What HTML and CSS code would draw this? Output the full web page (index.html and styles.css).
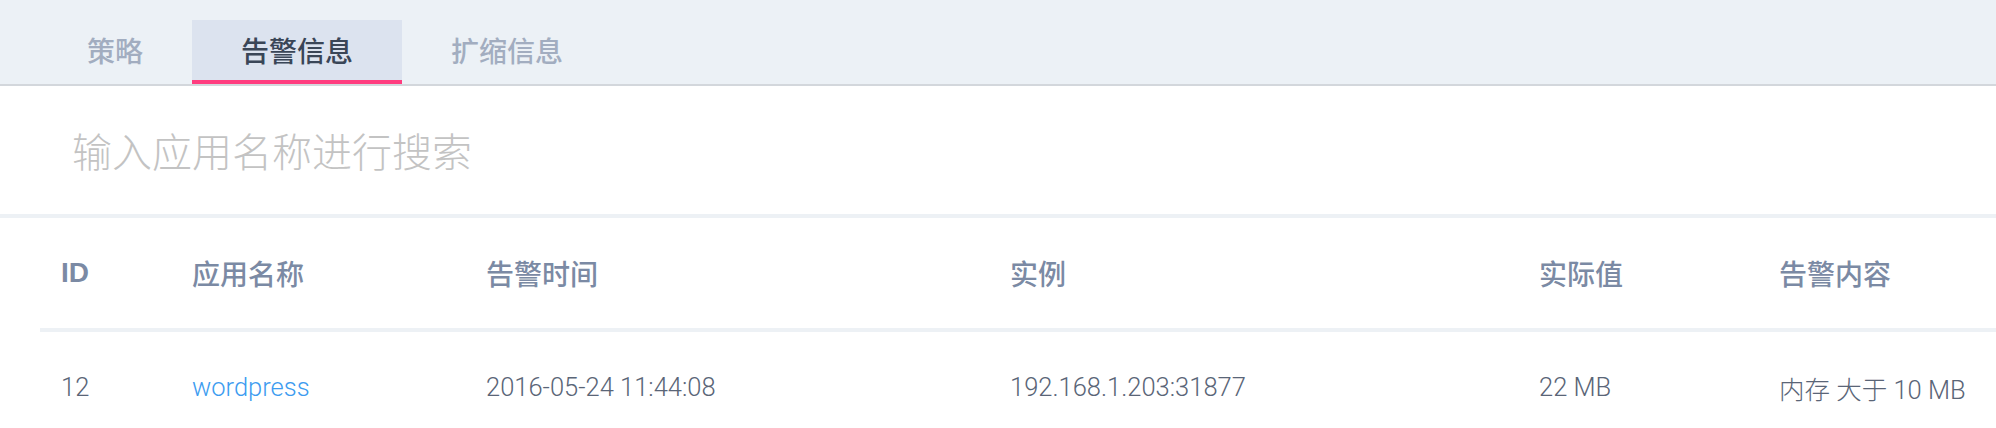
FILE: index.html
```html
<!DOCTYPE html>
<html lang="zh-CN">
<head>
<meta charset="utf-8">
<title>告警信息</title>
<link rel="stylesheet" href="styles.css">
</head>
<body>
<div class="tabbar">
  <div class="tab">策略</div>
  <div class="tab active">告警信息</div>
  <div class="tab">扩缩信息</div>
</div>
<div class="search">
  <input class="search-input" type="text" placeholder="输入应用名称进行搜索">
</div>
<div class="table">
  <div class="row head">
    <div class="cell">ID</div>
    <div class="cell">应用名称</div>
    <div class="cell">告警时间</div>
    <div class="cell">实例</div>
    <div class="cell">实际值</div>
    <div class="cell">告警内容</div>
  </div>
  <div class="row body">
    <div class="cell">12</div>
    <div class="cell"><a class="link" href="#">wordpress</a></div>
    <div class="cell">2016-05-24 11:44:08</div>
    <div class="cell">192.168.1.203:31877</div>
    <div class="cell">22 MB</div>
    <div class="cell">内存 大于 10 MB</div>
  </div>
</div>
</body>
</html>
```
FILE: styles.css
```css
* { box-sizing: border-box; }
html, body {
  margin: 0;
  padding: 0;
  background: #ffffff;
  font-family: "Noto Sans CJK SC", "Noto Sans", sans-serif;
}
.tabbar {
  display: flex;
  align-items: flex-end;
  height: 86px;
  padding-left: 38px;
  background: #ecf1f6;
  border-bottom: 2px solid #d3d7dc;
}
.tab {
  height: 64px;
  padding: 0 49px;
  line-height: 60px;
  font-size: 28px;
  font-weight: 500;
  color: #a2adc0;
  border-bottom: 4px solid transparent;
}
.tab.active {
  background: #dce3ef;
  color: #3a4657;
  border-bottom-color: #ff3d7f;
}
.search {
  height: 132px;
  display: flex;
  align-items: center;
  padding-left: 72px;
  border-bottom: 4px solid #edf1f5;
}
.search-input {
  width: 900px;
  border: none;
  outline: none;
  padding: 0;
  background: transparent;
  font-family: "Noto Sans CJK SC", sans-serif;
  font-size: 40px;
  font-weight: 300;
  color: #333;
}
.search-input::placeholder {
  color: #c3c3c3;
}
.table {
  margin-left: 40px;
}
.row {
  display: grid;
  grid-template-columns: 131px 294px 524px 529px 240px 1fr;
  align-items: center;
}
.row.head {
  height: 114px;
  border-bottom: 4px solid #edf1f5;
  font-size: 28px;
  font-weight: 500;
  color: #7b8aa4;
}
.row.body {
  height: 110px;
  font-family: Roboto, "Noto Sans CJK SC", sans-serif;
  font-size: 25.5px;
  font-weight: 300;
  color: #5a6577;
}
.cell {
  padding-left: 21px;
  white-space: nowrap;
}
.row.head .cell:first-child {
  font-family: "Liberation Sans", sans-serif;
  font-weight: 700;
}
.link {
  color: #3d9cf0;
  text-decoration: none;
}
```
